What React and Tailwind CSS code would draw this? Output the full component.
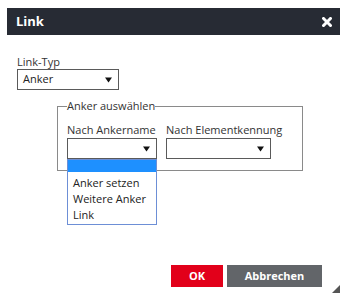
import React from "react";

function Arrow() {
  return (
    <svg width="7" height="6" viewBox="0 0 7 6" className="block">
      <path d="M0 0.5 H7 L3.5 5.5 Z" fill="#111" />
    </svg>
  );
}

function FakeSelect({ w, children }) {
  return (
    <div className={`${w} h-[21px] border border-[#5a5a5a] bg-white flex items-center justify-between pl-[5px] pr-[6px] text-[11px] text-[#222]`}>
      <span>{children}</span>
      <Arrow />
    </div>
  );
}

export default function App() {
  return (
    <div className="w-[348px] h-[300px] bg-white relative" style={{ fontFamily: '"Open Sans", sans-serif' }}>
      <div className="absolute left-[7px] top-[8px] w-[333px] h-[288px] bg-white flex flex-col">
        <div className="h-[27px] bg-[#272b34] flex items-center justify-between pl-[9px] pr-[8px]">
          <span className="text-white font-bold text-[13px] leading-none">Link</span>
          <svg width="10" height="10" viewBox="0 0 10 10">
            <path d="M1.5 1.5 L8.5 8.5 M8.5 1.5 L1.5 8.5" stroke="#fff" strokeWidth="3" strokeLinecap="square" />
          </svg>
        </div>
        <div className="flex-1 flex flex-col pl-[10px] pt-[20px] relative">
          <div className="text-[11px] leading-[14px] text-[#333]">Link-Typ</div>
          <div>
            <FakeSelect w="w-[102px]">Anker</FakeSelect>
          </div>
          <div className="ml-[40px] mt-[9px] w-[246px] relative">
            <fieldset className="border border-[#8a8a8a] pl-[9px] pr-[9px] pb-[11px] pt-[9px]">
              <legend className="text-[11px] leading-[14px] text-[#333] px-0">Anker auswählen</legend>
              <div className="flex gap-[9px]">
                <div className="flex flex-col relative">
                  <span className="text-[11px] leading-[16px] text-[#333] whitespace-nowrap">Nach Ankername</span>
                  <FakeSelect w="w-[90px]"></FakeSelect>
                  <div className="absolute left-0 top-[37px] w-[90px] border border-[#6d8fd6] bg-white z-10 text-[11px] text-[#222]">
                    <div className="h-[12px] bg-[#1e90ff]"></div>
                    <div className="pl-[5px] leading-[16px] mt-[3px]">Anker setzen</div>
                    <div className="pl-[5px] leading-[16px]">Weitere Anker</div>
                    <div className="pl-[5px] leading-[16px] mb-[1px]">Link</div>
                  </div>
                </div>
                <div className="flex flex-col">
                  <span className="text-[11px] leading-[16px] text-[#333] whitespace-nowrap">Nach Elementkennung</span>
                  <FakeSelect w="w-[105px]"></FakeSelect>
                </div>
              </div>
            </fieldset>
          </div>
          <div className="flex-1"></div>
          <div className="flex justify-end gap-[4px] pr-[18px] mb-[9px]">
            <div className="w-[52px] h-[22px] bg-[#e2001a] text-white font-bold text-[11px] flex items-center justify-center">OK</div>
            <div className="w-[95px] h-[22px] bg-[#626569] text-white font-bold text-[11px] flex items-center justify-center">Abbrechen</div>
          </div>
          <svg width="8" height="8" viewBox="0 0 8 8" className="absolute right-[0px] bottom-[3px]">
            <path d="M8 0 V8 H0 Z" fill="#555" />
          </svg>
        </div>
      </div>
    </div>
  );
}
